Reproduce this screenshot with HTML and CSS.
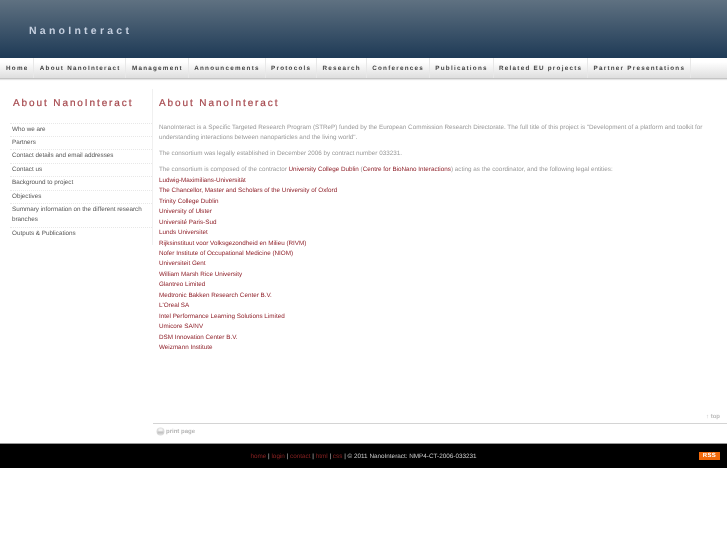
FILE: index.html
```html
<!DOCTYPE html>
<html lang="en">
<head>
<meta charset="utf-8">
<title>NanoInteract</title>
<link rel="stylesheet" href="styles.css">
</head>
<body>
<header class="banner"><div class="logo">NanoInteract</div></header>
<nav class="topnav">
<a href="#">Home</a><a href="#">About NanoInteract</a><a href="#">Management</a><a href="#">Announcements</a><a href="#">Protocols</a><a href="#">Research</a><a href="#">Conferences</a><a href="#">Publications</a><a href="#">Related EU projects</a><a href="#">Partner Presentations</a>
</nav>
<div class="layout">
<aside class="side">
<h2>About NanoInteract</h2>
<ul>
<li><a href="#">Who we are</a></li>
<li><a href="#">Partners</a></li>
<li><a href="#">Contact details and email addresses</a></li>
<li><a href="#">Contact us</a></li>
<li><a href="#">Background to project</a></li>
<li><a href="#">Objectives</a></li>
<li><a href="#">Summary information on the different research branches</a></li>
<li><a href="#">Outputs &amp; Publications</a></li>
</ul>
</aside>
<main class="main">
<div class="article">
<h1>About NanoInteract</h1>
<p>NanoInteract is a Specific Targeted Research Program (STReP) funded by the European Commission Research Directorate. The full title of this project is "Development of a platform and toolkit for understanding interactions between nanoparticles and the living world".</p>
<p>The consortium was legally established in December 2006 by contract number 033231.</p>
<p class="list">The consortium is composed of the contractor <a href="#">University College Dublin</a> (<a href="#">Centre for BioNano Interactions</a>) acting as the coordinator, and the following legal entities:<br>
<a href="#">Ludwig-Maximilians-Universität</a><br>
<a href="#">The Chancellor, Master and Scholars of the University of Oxford</a><br>
<a href="#">Trinity College Dublin</a><br>
<a href="#">University of Ulster</a><br>
<a href="#">Université Paris-Sud</a><br>
<a href="#">Lunds Universitet</a><br>
<a href="#">Rijksinstituut voor Volksgezondheid en Milieu (RIVM)</a><br>
<a href="#">Nofer Institute of Occupational Medicine (NIOM)</a><br>
<a href="#">Universiteit Gent</a><br>
<a href="#">William Marsh Rice University</a><br>
<a href="#">Glantreo Limited</a><br>
<a href="#">Medtronic Bakken Research Center B.V.</a><br>
<a href="#">L'Oreal SA</a><br>
<a href="#">Intel Performance Learning Solutions Limited</a><br>
<a href="#">Umicore SA/NV</a><br>
<a href="#">DSM Innovation Center B.V.</a><br>
<a href="#">Weizmann Institute</a></p>
</div>
<div class="top-link"><a href="#">↑ top</a></div>
<div class="print">
<svg class="print-icon" width="9" height="9" viewBox="0 0 9 9" aria-hidden="true"><circle cx="4.5" cy="4.5" r="4" fill="#dcdcdc"/><rect x="2.5" y="1.5" width="4" height="3" fill="#f4f4f4"/><rect x="1.5" y="4.5" width="6" height="2" fill="#c4c4c4"/></svg>
<a href="#">print page</a>
</div>
</main>
</div>
<footer class="foot">
<div class="foot-text"><a href="#">home</a> | <a href="#">login</a> | <a href="#">contact</a> | <a href="#">html</a> | <a href="#">css</a> | © 2011 NanoInteract: NMP4-CT-2006-033231</div>
<a class="rss" href="#">RSS</a>
</footer>
</body>
</html>
```
FILE: styles.css
```css
html { background: #fff; }
body { margin: 0; padding: 0; font-family: "Liberation Sans", Arial, sans-serif; font-size: 6.3px; color: #a9a9a9; text-rendering: geometricPrecision; filter: blur(0.45px); }
a { text-decoration: none; color: inherit; }

.banner { height: 58px; background: linear-gradient(#5f7181, #1e3a56); display: flex; align-items: center; padding: 3px 0 0 29px; box-sizing: border-box; }
.logo { font-size: 10.5px; font-weight: bold; letter-spacing: 3.25px; color: #c6d0e0; }

.topnav { height: 20px; padding-left: 0.5px; background: linear-gradient(#fff 20%, #dedede); border-bottom: 1px solid #c4c4c4; display: flex; box-shadow: 0 1px 1px #e4e4e4; }
.topnav a { display: flex; align-items: center; padding: 0 4.75px 0 5.5px; white-space: nowrap; font-weight: bold; letter-spacing: 1.25px; color: #444; border-right: 1px solid #e8e8e8; }

.layout { display: flex; align-items: flex-start; height: 364px; }

.side { width: 153px; height: 156px; margin-top: 10px; border-right: 1px solid #f0f0f0; box-sizing: border-box; flex: none; }
.side h2 { margin: 8px 0 12.5px 13px; font-size: 10px; line-height: 13px; font-weight: normal; letter-spacing: 1.9px; color: #a5474c; -webkit-text-stroke: 0.2px #a5474c; }
.side ul { list-style: none; margin: 0 0 0 10px; padding: 0; }
.side li { border-top: 1px dotted #e8e8e8; padding: 1px 10px 1px 2px; line-height: 10.4px; color: #555; }
.side li a { display: block; }

.main { flex: 1; align-self: stretch; display: flex; flex-direction: column; min-width: 0; }
.article { flex: 1; padding: 0 22px 0 6px; }
.article h1 { margin: 18px 0 13px; font-size: 10px; line-height: 13px; font-weight: normal; letter-spacing: 1.9px; color: #a5474c; -webkit-text-stroke: 0.2px #a5474c; }
.article p { margin: 0 0 5.5px; line-height: 10.45px; color: #999; }
.article a { color: #8e1f28; }

.top-link { text-align: right; padding: 0 7px 1px 0; font-size: 6px; line-height: 10px; font-weight: bold; color: #bbb; border-bottom: 1px solid #d4d4d4; }
.print { height: 19px; padding: 3px 0 0 3px; box-sizing: border-box; display: flex; gap: 1px; align-items: flex-start; font-size: 6px; line-height: 10px; font-weight: bold; color: #b5b5b5; }

.foot { height: 25px; background: #000; border-top: 1px solid #999; box-sizing: border-box; display: grid; grid-template-columns: 1fr auto 1fr; align-items: center; padding: 0 7px; }
.foot-text { grid-column: 2; font-size: 6.35px; color: #ccc; }
.foot-text a { color: #8a2222; }
.rss { grid-column: 3; justify-self: end; background: #f26a0c; color: #fff; font-weight: bold; font-size: 6px; line-height: 8px; width: 21px; text-align: center; letter-spacing: 0.4px; }
```
